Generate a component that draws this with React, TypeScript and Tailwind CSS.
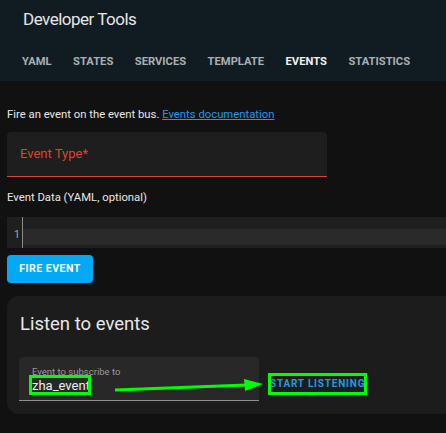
import React from 'react';

const tabs = ['YAML', 'STATES', 'SERVICES', 'TEMPLATE', 'EVENTS', 'STATISTICS'];

export default function App() {
  return (
    <div
      className="w-[446px] h-[433px] overflow-hidden bg-[#111111] text-[#e1e1e1]"
      style={{ fontFamily: 'Roboto, "Liberation Sans", sans-serif' }}
    >
      {/* header */}
      <div className="h-[81px] bg-[#111c22] flex flex-col">
        <div className="h-[40px] pl-[23px] flex items-center text-[17px] tracking-[-0.5px] text-[#e6e6e6]">
          Developer Tools
        </div>
        <div className="flex-1 flex items-center pt-[4px] pl-[22px] gap-[21.5px] text-[11.2px] font-bold">
          {tabs.map((t) => (
            <span key={t} className={t === 'EVENTS' ? 'text-[#f0f0f0]' : 'text-[#a9b0b3]'}>
              {t}
            </span>
          ))}
        </div>
      </div>

      {/* fire event */}
      <div className="pl-[7px] pt-[26px]">
        <p className="text-[11.3px] leading-[16px] text-[#e8e8e8]">
          Fire an event on the event bus.{' '}
          <a className="text-[#2196f3] underline">Events documentation</a>
        </p>

        <div className="mt-[9px] w-[320px] h-[45px] bg-[#1e1e1e] rounded-t-[4px] border-b border-[#db4437] flex items-center pl-[13px]">
          <span className="text-[13px] text-[#db4437]">Event Type*</span>
        </div>

        <p className="mt-[13px] text-[11.3px] leading-[16px] text-[#e8e8e8]">Event Data (YAML, optional)</p>

        <div className="mt-[11px] h-[31px] flex bg-[#1f1f1f]">
          <div className="w-[16px] border-r border-[#8a8a8a] flex items-end justify-end pr-[2px] pb-[5px] text-[10.5px] text-[#9ab0b8]">
            1
          </div>
          <div className="flex-1 flex flex-col">
            <div className="h-[12px]" />
            <div className="h-[16px] bg-[#2a2a2a]" />
          </div>
        </div>

        <button className="mt-[7px] w-[86px] h-[28px] rounded-[4px] bg-[#03a9f4] text-white text-[10.5px] font-bold tracking-[0.5px]">
          FIRE EVENT
        </button>
      </div>

      {/* listen card */}
      <div className="ml-[7px] mt-[13px] w-[460px] h-[118px] rounded-[12px] bg-[#1c1c1c] relative">
        <div className="pl-[13px] pt-[15px] text-[18.5px] leading-[26px] text-[#e8e8e8]">Listen to events</div>
        <div className="mt-[20px] ml-[12px] flex items-center">
          <div className="w-[240px] h-[44px] bg-[#282828] rounded-t-[4px] border-b border-[#8f8f8f] flex flex-col pl-[13px] pt-[9px]">
            <span className="text-[9.5px] leading-[11px] text-[#9a9a9a]">Event to subscribe to</span>
            <span className="text-[13px] leading-[18px] text-[#eeeeee]">zha_event</span>
          </div>
          <span className="ml-[11px] mt-[8px] text-[10px] font-bold tracking-[0.8px] text-[#1e9be6]">START LISTENING</span>
        </div>

        {/* annotations */}
        <div className="absolute left-[22px] top-[79px] w-[62px] h-[20px] border-[3px] border-[#00ff00]" />
        <div className="absolute left-[261px] top-[77px] w-[99px] h-[22px] border-[3px] border-[#00ff00]" />
        <svg className="absolute left-[100px] top-[80px]" width="160" height="18" viewBox="0 0 160 18">
          <path d="M8 14 L140 9" stroke="#00ff00" strokeWidth="3" />
          <path d="M137 3 L156 8 L138 15 Z" fill="#00ff00" />
        </svg>
      </div>
    </div>
  );
}
